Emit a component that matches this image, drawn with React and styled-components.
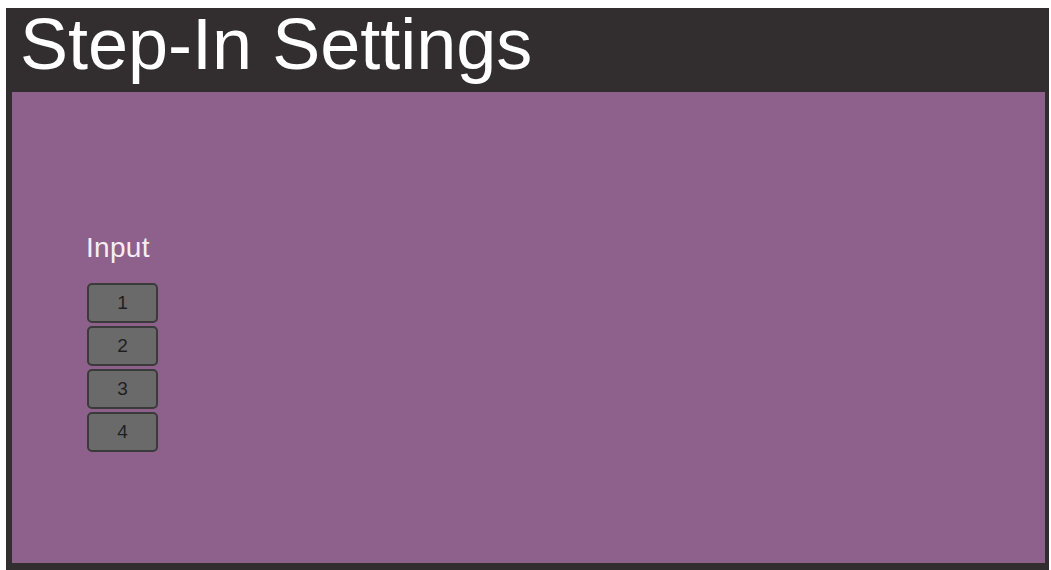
import React from "react";
import styled, { createGlobalStyle } from "styled-components";

const GlobalStyle = createGlobalStyle`
    html, body {
        margin: 0;
        padding: 0;
        background: #ffffff;
        font-family: "Liberation Sans", Arial, sans-serif;
    }
`;

const Page = styled.div`
    width: 1051px;
    height: 570px;
    box-sizing: border-box;
    padding: 8px 2px 0 6px;
    overflow: hidden;
`;

const Frame = styled.div`
    height: 100%;
    display: flex;
    flex-direction: column;
    background: #322e2f;
    padding: 0 4px 7px 6px;
    box-sizing: border-box;
`;

const Header = styled.header`
    height: 84px;
    flex-shrink: 0;
    display: flex;
    align-items: flex-start;
    padding-left: 8px;
`;

const Title = styled.h1`
    margin: 0;
    color: #ffffff;
    font-size: 72px;
    font-weight: normal;
    line-height: 1;
`;

const Panel = styled.main`
    flex: 1;
    background: #8e608c;
    padding: 142px 0 0 74px;
    box-sizing: border-box;
`;

const InputGroup = styled.div`
    display: flex;
    flex-direction: column;
    align-items: flex-start;
    width: 72px;
`;

const Label = styled.div`
    color: #f4eef4;
    font-size: 28px;
    letter-spacing: 0.3px;
    margin-bottom: 21px;
    line-height: 1;
`;

const ButtonStack = styled.div`
    display: flex;
    flex-direction: column;
    gap: 3px;
    margin-left: 1px;
`;

const InputButton = styled.button`
    width: 71px;
    height: 40px;
    box-sizing: border-box;
    background: #6b6a6b;
    border: 2px solid #3b3a3b;
    border-radius: 5px;
    color: #1f1f1f;
    font-family: "Liberation Sans", Arial, sans-serif;
    font-size: 19px;
    padding: 0;
    cursor: pointer;
`;

const inputs = [1, 2, 3, 4];

const App = () => {
    return (
        <>
            <GlobalStyle />
            <Page>
                <Frame>
                    <Header>
                        <Title>Step-In Settings</Title>
                    </Header>
                    <Panel>
                        <InputGroup>
                            <Label>Input</Label>
                            <ButtonStack>
                                {inputs.map((n) => (
                                    <InputButton key={n}>{n}</InputButton>
                                ))}
                            </ButtonStack>
                        </InputGroup>
                    </Panel>
                </Frame>
            </Page>
        </>
    );
};

export default App;
